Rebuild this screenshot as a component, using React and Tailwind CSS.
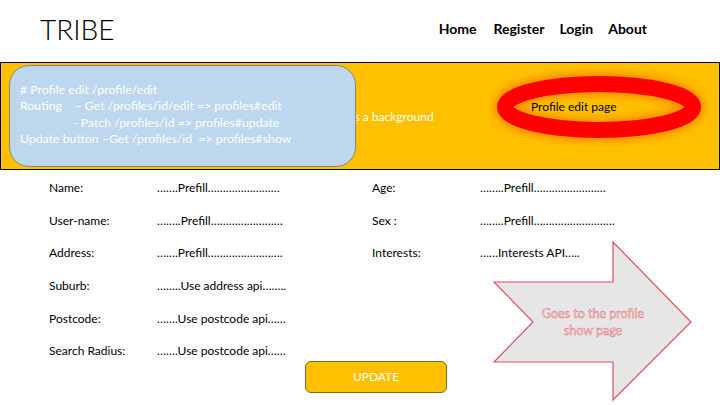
const FONT = { fontFamily: 'Lato, "Open Sans", sans-serif' }

const LEFT = [
  ['Name:', '…….Prefill……………………'],
  ['User-name:', '……..Prefill……………………'],
  ['Address:', '…….Prefill…………………….'],
  ['Suburb:', '……..Use address api……..'],
  ['Postcode:', '…….Use postcode api……'],
  ['Search Radius:', '…….Use postcode api……'],
]

const RIGHT = [
  ['Age:', '……..Prefill……………………'],
  ['Sex :', '……..Prefill………………………'],
  ['Interests:', '……Interests API…..'],
]

function Field({ label, value }) {
  return (
    <div className="flex items-center h-[32.6px] text-[12px] text-black">
      <span className="w-[108px] shrink-0">{label}</span>
      <span className="whitespace-nowrap">{value}</span>
    </div>
  )
}

function Arrow() {
  return (
    <div className="absolute left-[490px] top-[238px] w-[206px] h-[166px]">
      <svg width="206" height="166" viewBox="0 0 206 166" className="absolute inset-0">
        <polygon
          points="4,44 123,44 123,4 201,84 123,162 123,124 4,124 43,84"
          fill="#e7e6e6"
          stroke="#e0525a"
          strokeWidth="1.2"
        />
      </svg>
      <div className="absolute left-[28px] top-[67px] w-[150px] text-center text-[12.5px] leading-[17px] text-[#fce4e4] [-webkit-text-stroke:0.45px_#e06a6a]">
        Goes to the profile<br />show page
      </div>
    </div>
  )
}

function Ring() {
  return (
    <div className="absolute left-[488px] top-[6px] w-[220px] h-[76px] flex items-center">
      <svg width="220" height="76" viewBox="0 0 220 76" className="absolute inset-0">
        <defs>
          <filter id="glow" x="-20%" y="-40%" width="140%" height="180%">
            <feGaussianBlur stdDeviation="3.5" />
          </filter>
        </defs>
        <ellipse cx="110" cy="38" rx="94" ry="23" fill="none" stroke="#ff6a00" strokeWidth="24" opacity="0.55" filter="url(#glow)" />
        <ellipse cx="110" cy="38" rx="94" ry="23" fill="none" stroke="#ff0000" strokeWidth="16" />
      </svg>
      <span className="relative pl-[42px] text-[12px] text-black">Profile edit page</span>
    </div>
  )
}

export default function App() {
  return (
    <div className="relative w-[720px] h-[405px] bg-white overflow-hidden" style={FONT}>
      {/* header */}
      <div className="flex items-center justify-between h-[62px] pl-[40px] pr-[73px]">
        <div className="text-[28px] font-light text-black mt-[-4px]">TRIBE</div>
        <nav className="flex gap-[15px] text-[14px] font-bold text-black mt-[-6px]">
          <span className="mr-[2px]">Home</span>
          <span>Register</span>
          <span>Login</span>
          <span>About</span>
        </nav>
      </div>

      {/* banner */}
      <div className="relative h-[108px] bg-[#ffc000] border border-black">
        <div className="absolute left-[316px] top-[45px] text-[12px] text-white whitespace-nowrap">
          Image is a background
        </div>

        <div className="absolute left-[8px] top-[2px] w-[347px] h-[102px] rounded-[20px] bg-[#bdd7ee] border border-[#8a8a6a] pt-[16px] pl-[10px] text-[12.3px] leading-[16.3px] text-white whitespace-nowrap">
          <div># Profile edit /profile/edit</div>
          <div>Routing&nbsp;&nbsp;&nbsp;&nbsp;– Get /profiles/id/edit =&gt; profiles#edit</div>
          <div className="pl-[53px]">- Patch /profiles/id =&gt; profiles#update</div>
          <div>Update button –Get /profiles/id&nbsp;&nbsp;=&gt; profiles#show</div>
        </div>

        <Ring />
      </div>

      {/* form */}
      <div className="flex pt-[2px]">
        <div className="pl-[49px] w-[372px] flex flex-col">
          {LEFT.map(([l, v]) => <Field key={l} label={l} value={v} />)}
        </div>
        <div className="flex flex-col">
          {RIGHT.map(([l, v]) => <Field key={l} label={l} value={v} />)}
        </div>
      </div>

      <div className="flex pl-[305px] mt-[-7px]">
        <button className="w-[142px] h-[32px] rounded-[6px] bg-[#ffc000] border border-[#7f6a20] text-[12px] text-white">
          UPDATE
        </button>
      </div>

      <Arrow />
    </div>
  )
}
